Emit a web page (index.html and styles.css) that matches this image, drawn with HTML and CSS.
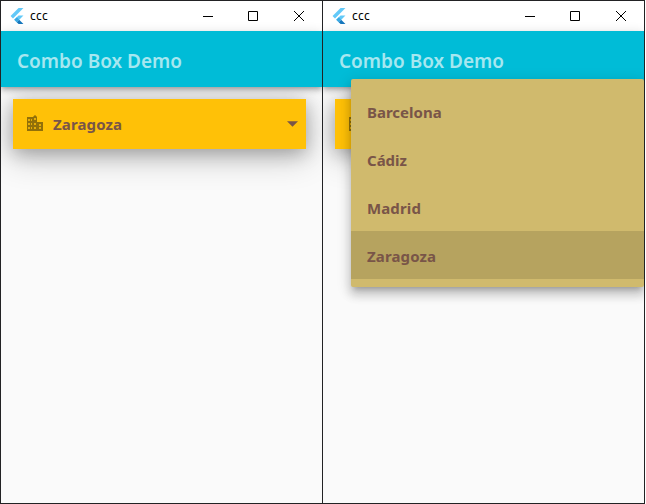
FILE: index.html
```html
<!DOCTYPE html>
<html lang="es">
<head>
<meta charset="utf-8">
<title>Combo Box Demo</title>
<link rel="stylesheet" href="styles.css">
</head>
<body>
<svg class="defs" aria-hidden="true">
  <symbol id="flutter" viewBox="0 0 24 24">
    <path fill="#62c9f8" d="M14.3 0 2.3 12 6 15.7 21.7 0z"/>
    <path fill="#62c9f8" d="M14.3 11.1 7.9 17.5l3.7 3.7 10.1-10.1z"/>
    <path fill="#1677bd" d="m11.6 21.2 2.8 2.8h7.3l-6.4-6.5z"/>
    <path fill="#39a9e3" d="m7.9 17.5 3.7-3.7 3.7 3.7-3.7 3.7z"/>
  </symbol>
  <symbol id="city" viewBox="0 0 16 16">
    <path opacity=".25" d="M0 2h6l2-2 2 2v5h6v9H0z"/>
    <path fill-rule="evenodd" d="M0 2h6l2-2 2 2v5h6v9H0zM1 4v2h2V4zM1 8v2h2V8zM1 12v2h2v-2zM4 4v2h1V4zM4 8v2h1V8zM4 12v2h1v-2zM7 3v2h2V3zM7 8v2h2V8zM7 12v2h2v-2zM12 9v2h2V9zM12 12v2h2v-2z"/>
  </symbol>
  <symbol id="controls" viewBox="0 0 114 12">
    <path fill="none" stroke="#000" d="M1 6.5h10M46.5 1.5h9v9h-9z"/>
    <path fill="none" stroke="#000" d="m92 1 10 10M102 1 92 11"/>
  </symbol>
</svg>
<main class="screens">
  <section class="window">
    <header class="titlebar">
      <svg class="logo"><use href="#flutter"/></svg>
      <span class="caption">ccc</span>
      <svg class="controls"><use href="#controls"/></svg>
    </header>
    <div class="appbar"><h1>Combo Box Demo</h1></div>
    <div class="content">
      <div class="combo">
        <svg class="city"><use href="#city"/></svg>
        <span class="value">Zaragoza</span>
        <svg class="arrow" viewBox="0 0 10 5"><path d="M0 0h10L5 5z"/></svg>
      </div>
    </div>
  </section>
  <section class="window">
    <header class="titlebar">
      <svg class="logo"><use href="#flutter"/></svg>
      <span class="caption">ccc</span>
      <svg class="controls"><use href="#controls"/></svg>
    </header>
    <div class="appbar"><h1>Combo Box Demo</h1></div>
    <div class="content">
      <div class="combo">
        <svg class="city"><use href="#city"/></svg>
      </div>
    </div>
    <ul class="menu">
      <li class="barcelona">Barcelona</li>
      <li class="cadiz">Cádiz</li>
      <li class="madrid">Madrid</li>
      <li class="selected">Zaragoza</li>
    </ul>
  </section>
</main>
</body>
</html>
```
FILE: styles.css
```css
* { box-sizing: border-box; }
body {
  margin: 0;
  background: #fff;
  font-family: "Noto Sans", "Open Sans", sans-serif;
  overflow: hidden;
}
.defs { position: absolute; width: 0; height: 0; }
.screens {
  display: grid;
  grid-template-columns: 321px 321px;
  gap: 1px;
  width: 645px;
  height: 504px;
  padding: 1px;
  background: #222224;
}
.window {
  position: relative;
  display: flex;
  flex-direction: column;
  background: #fafafa;
  overflow: hidden;
}
.titlebar {
  display: flex;
  align-items: center;
  height: 30px;
  padding: 0 14px 0 8px;
  background: #fff;
}
.logo { width: 16px; height: 16px; }
.caption {
  margin-left: 5px;
  font-size: 12px;
  line-height: 16px;
  letter-spacing: .2px;
  color: #000;
}
.controls { width: 114px; height: 12px; margin-left: auto; margin-right: -8px; }
.appbar {
  position: relative;
  z-index: 1;
  display: flex;
  align-items: center;
  height: 56px;
  padding: 4px 16px 0;
  background: #00bcd7;
  box-shadow: 0 2px 4px -1px rgba(0, 0, 0, .2), 0 4px 5px rgba(0, 0, 0, .14), 0 1px 10px rgba(0, 0, 0, .12);
}
h1 {
  margin: 0;
  font-size: 19px;
  line-height: 28px;
  font-weight: 600;
  color: #a6e7f0;
  white-space: nowrap;
}
.content { padding: 12px; }
.combo {
  display: flex;
  align-items: center;
  width: 293px;
  height: 50px;
  padding: 0 8px 0 14px;
  background: #ffc107;
  box-shadow: 0 4px 18px rgba(0, 0, 0, .25), 0 8px 32px 2px rgba(0, 0, 0, .2);
}
.city { width: 16px; height: 16px; margin-top: -2px; fill: #927009; }
.value { margin-left: 10px; }
.value, .menu li {
  font-size: 15px;
  font-weight: 700;
  color: #795548;
}
.value, .menu .selected, .menu .madrid { letter-spacing: .12px; }
.arrow { width: 11px; height: 6px; margin-left: auto; fill: #795548; }
.menu {
  position: absolute;
  z-index: 2;
  top: 78px;
  left: 28px;
  width: 293px;
  height: 208px;
  margin: 0;
  padding: 8px 0;
  list-style: none;
  background: #d0ba6d;
  border-radius: 2px;
  box-shadow: 0 5px 5px -3px rgba(0, 0, 0, .2), 0 8px 10px 1px rgba(0, 0, 0, .14), 0 3px 14px 2px rgba(0, 0, 0, .12);
}
.menu li {
  height: 48px;
  padding-left: 16px;
  line-height: 50px;
}
.menu .selected { background: #b6a35f; }
```
